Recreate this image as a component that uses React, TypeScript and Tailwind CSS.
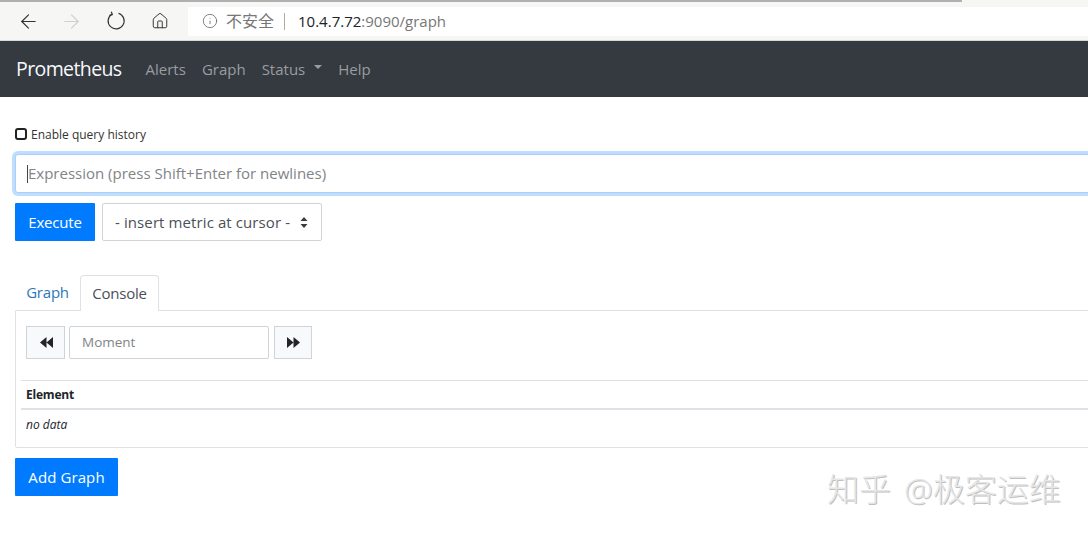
import { ArrowLeft, ArrowRight, Home, Info } from "lucide-react";

function TriLeft() {
  return (
    <svg width="13" height="11" viewBox="0 0 13 11" className="fill-[#212529] translate-x-[1px]">
      <path d="M6.5 0v11L0 5.5zM13 0v11L6.5 5.5z" />
    </svg>
  );
}

function TriRight() {
  return (
    <svg width="13" height="11" viewBox="0 0 13 11" className="fill-[#212529]">
      <path d="M0 0v11l6.5-5.5zM6.5 0v11L13 5.5z" />
    </svg>
  );
}

function Reload() {
  return (
    <svg width="20" height="20" viewBox="0 0 20 20" fill="none" stroke="#333" strokeWidth="1.2" className="ml-[23px]">
      <path d="M12.500 2.300A8 8 0 1 1 5.800 3.200" />
      <path d="M5.300 0.800L6.300 3.600L3.500 4.300" />
    </svg>
  );
}

export default function App() {
  return (
    <div className="relative w-[1088px] h-[534px] overflow-hidden bg-white text-[#495057] font-['Open_Sans','Noto_Sans_CJK_SC',sans-serif]">
      {/* browser chrome */}
      <div className="h-[41px] bg-[#f6f6f5] border-b border-[#d8d8d8] flex flex-col">
        <div className="h-[2px] w-[962px] bg-[#b0b0b0] shrink-0" />
        <div className="flex items-center flex-1">
          <div className="w-[188px] flex items-center shrink-0 text-[#333]">
            <ArrowLeft size={23} strokeWidth={1.2} className="ml-[17px]" />
            <ArrowRight size={23} strokeWidth={1.2} className="ml-[20px] text-[#cfcfcf]" />
            <Reload />
            <Home size={18} strokeWidth={1.3} className="ml-[25px]" />
          </div>
          <div className="flex-1 h-[29px] bg-white flex items-center text-[15px] text-[#777]">
            <Info size={16} strokeWidth={1.2} className="ml-[14px] text-[#666]" />
            <span className="ml-[8px] text-[16px]">不安全</span>
            <span className="ml-[10px] h-[17px] w-px bg-[#aaa]" />
            <span className="ml-[13px]">
              <span className="text-[#222]">10.4.7.72</span>:9090/graph
            </span>
          </div>
        </div>
      </div>

      {/* navbar */}
      <nav className="h-[56px] bg-[#343a40] flex items-center pl-[16px]">
        <span className="text-[19.5px] text-[#f8f9fa] tracking-[-0.6px]">Prometheus</span>
        <div className="flex items-center ml-[24px] text-[15px] text-[#9a9da0]">
          <span>Alerts</span>
          <span className="ml-[16px]">Graph</span>
          <span className="ml-[16px]">Status</span>
          <span className="ml-[9px] w-0 h-0 border-x-[4.5px] border-x-transparent border-t-[4.5px] border-t-[#9a9da0] -translate-y-[2px]" />
          <span className="ml-[16px]">Help</span>
        </div>
      </nav>

      <div className="pl-[15px]">
        {/* history */}
        <div className="flex items-center h-[20px] mt-[27px]">
          <span className="w-[12px] h-[12px] border-2 border-[#222] rounded-[3px]" />
          <span className="ml-[4px] pt-[1px] text-[12px] text-[#333]">Enable query history</span>
        </div>

        {/* expression */}
        <div className="mt-[10px] h-[39px] w-[1100px] border border-[#a9d0f5] shadow-[0_0_0_3px_rgba(0,123,255,0.25)] rounded-l-[3px] bg-white flex items-center pl-[11px] text-[15px] text-[#808488]">
          <span className="w-px h-[18px] bg-[#444]" />
          <span>Expression (press Shift+Enter for newlines)</span>
        </div>

        <div className="flex mt-[10px]">
          <button className="w-[80px] h-[38px] bg-[#007bff] text-white text-[15px] tracking-[-0.2px] rounded-[1px]">
            Execute
          </button>
          <div className="ml-[7px] w-[220px] h-[38px] border border-[#ced4da] rounded-[2px] flex items-center pl-[12px] text-[15px] text-[#495057]">
            <span className="tracking-[0.1px]">- insert metric at cursor -</span>
            <svg width="8" height="11" viewBox="0 0 8 11" className="ml-[10px] fill-[#343a40]">
              <path d="M4 0l3.5 4h-7zM4 11L.5 7h7z" />
            </svg>
          </div>
        </div>

        {/* tabs */}
        <div className="flex mt-[34px] h-[36px] text-[15px] tracking-[-0.2px] relative z-10">
          <span className="w-[65px] flex items-center justify-center pb-[1px] text-[#2c77b8]">Graph</span>
          <span className="w-[79px] h-[36px] flex items-center justify-center bg-white border border-b-0 border-[#dee2e6] rounded-t-[4px] text-[#495057]">
            Console
          </span>
        </div>

        {/* panel */}
        <div className="-mt-px h-[138px] w-[1100px] border border-[#dee2e6] rounded-b-[2px]">
          <div className="flex items-center mt-[15px] ml-[10px]">
            <button className="w-[39px] h-[33px] bg-[#f8f9fa] border border-[#ced4da] flex items-center justify-center">
              <TriLeft />
            </button>
            <div className="ml-[4px] w-[200px] h-[33px] border border-[#ced4da] rounded-[2px] pl-[12px] flex items-center text-[13.5px] text-[#808488]">
              Moment
            </div>
            <button className="ml-[5px] w-[38px] h-[33px] bg-[#f8f9fa] border border-[#ced4da] flex items-center justify-center">
              <TriRight />
            </button>
          </div>
          <div className="mt-[21px] ml-[5px] border-t border-[#dee2e6] h-[30px] border-b-2 pl-[5px] flex items-center text-[12px] font-bold text-[#212529] tracking-[-0.2px]">
            Element
          </div>
          <div className="ml-[10px] mt-[6px] text-[12px] italic text-[#212529]">no data</div>
        </div>

        <button className="mt-[10px] w-[103px] h-[38px] bg-[#007bff] text-white text-[15px] tracking-[0.1px] rounded-[1px]">
          Add Graph
        </button>
      </div>

      {/* watermark */}
      <div className="absolute left-[827px] top-[470px] text-[32px] leading-[38px] font-light text-[#e6e6e6] [text-shadow:1px_1px_0_#c0c0c0] whitespace-nowrap [word-spacing:5px]">
        知乎 @极客运维
      </div>
    </div>
  );
}
